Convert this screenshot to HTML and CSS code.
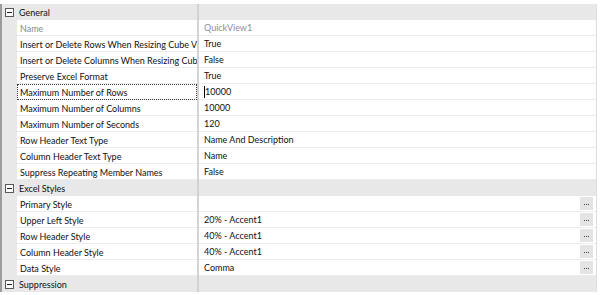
FILE: index.html
```html
<!DOCTYPE html>
<html>
  <head>
    <meta charset="UTF-8">
    <title>Property Grid</title>
    <link rel="stylesheet" href="styles.css">
  </head>
  <body>
    <div class="grid">
      <!-- General -->
      <div class="row cat">
        <div class="gutter"><span class="toggle"></span></div>
        <div class="name">General</div>
        <div class="split"></div>
        <div class="value"></div>
      </div>
      <div class="row prop readonly">
        <div class="gutter"></div>
        <div class="name">Name</div>
        <div class="split"></div>
        <div class="value">QuickView1</div>
      </div>
      <div class="row prop">
        <div class="gutter"></div>
        <div class="name">Insert or Delete Rows When Resizing Cube View</div>
        <div class="split"></div>
        <div class="value">True</div>
      </div>
      <div class="row prop">
        <div class="gutter"></div>
        <div class="name">Insert or Delete Columns When Resizing Cube View</div>
        <div class="split"></div>
        <div class="value">False</div>
      </div>
      <div class="row prop">
        <div class="gutter"></div>
        <div class="name">Preserve Excel Format</div>
        <div class="split"></div>
        <div class="value">True</div>
      </div>
      <div class="row prop focused">
        <div class="gutter"></div>
        <div class="name">Maximum Number of Rows</div>
        <div class="split"></div>
        <div class="value"><span class="caret"></span>10000</div>
      </div>
      <div class="row prop">
        <div class="gutter"></div>
        <div class="name">Maximum Number of Columns</div>
        <div class="split"></div>
        <div class="value">10000</div>
      </div>
      <div class="row prop">
        <div class="gutter"></div>
        <div class="name">Maximum Number of Seconds</div>
        <div class="split"></div>
        <div class="value">120</div>
      </div>
      <div class="row prop">
        <div class="gutter"></div>
        <div class="name">Row Header Text Type</div>
        <div class="split"></div>
        <div class="value">Name And Description</div>
      </div>
      <div class="row prop">
        <div class="gutter"></div>
        <div class="name">Column Header Text Type</div>
        <div class="split"></div>
        <div class="value">Name</div>
      </div>
      <div class="row prop">
        <div class="gutter"></div>
        <div class="name">Suppress Repeating Member Names</div>
        <div class="split"></div>
        <div class="value">False</div>
      </div>

      <!-- Excel Styles -->
      <div class="row cat">
        <div class="gutter"><span class="toggle"></span></div>
        <div class="name">Excel Styles</div>
        <div class="split"></div>
        <div class="value"></div>
      </div>
      <div class="row prop">
        <div class="gutter"></div>
        <div class="name">Primary Style</div>
        <div class="split"></div>
        <div class="value"><span class="text"></span><span class="dots-btn"><span></span><span></span><span></span></span></div>
      </div>
      <div class="row prop">
        <div class="gutter"></div>
        <div class="name">Upper Left Style</div>
        <div class="split"></div>
        <div class="value"><span class="text">20% - Accent1</span><span class="dots-btn"><span></span><span></span><span></span></span></div>
      </div>
      <div class="row prop">
        <div class="gutter"></div>
        <div class="name">Row Header Style</div>
        <div class="split"></div>
        <div class="value"><span class="text">40% - Accent1</span><span class="dots-btn"><span></span><span></span><span></span></span></div>
      </div>
      <div class="row prop">
        <div class="gutter"></div>
        <div class="name">Column Header Style</div>
        <div class="split"></div>
        <div class="value"><span class="text">40% - Accent1</span><span class="dots-btn"><span></span><span></span><span></span></span></div>
      </div>
      <div class="row prop">
        <div class="gutter"></div>
        <div class="name">Data Style</div>
        <div class="split"></div>
        <div class="value"><span class="text">Comma</span><span class="dots-btn"><span></span><span></span><span></span></span></div>
      </div>

      <!-- Suppression -->
      <div class="row cat">
        <div class="gutter"><span class="toggle"></span></div>
        <div class="name">Suppression</div>
        <div class="split"></div>
        <div class="value"></div>
      </div>
    </div>
  </body>
</html>
```

FILE: styles.css
```css
/* Base */
* {
  box-sizing: border-box;
}
body {
  margin: 0;
  background: #fff;
  font-family: 'Lato', 'Open Sans', sans-serif;
  font-size: 9px;
  color: #111;
}
/* Property grid frame */
.grid {
  margin-top: 4px;
  width: 597px;
  border-left: 2px solid #9c9c9c;
  border-right: 1px solid #dedede;
}
.row {
  display: grid;
  grid-template-columns: 15px 180px 2px 1fr;
  height: 16px;
  line-height: 17px;
}
.gutter {
  background: #e8e8e8;
  position: relative;
}
.split {
  background: #d4d4d4;
}
.name, .value {
  white-space: nowrap;
  overflow: hidden;
}
/* Category rows */
.cat {
  background: #e8e8e8;
}
.cat .name {
  padding-left: 2px;
}
.cat .split {
  background: #d2d2d2;
}
.toggle {
  position: absolute;
  left: 3px;
  top: 4px;
  width: 9px;
  height: 9px;
  border: 1px solid #5a5a5a;
  background: #fff;
}
.toggle::after {
  content: "";
  position: absolute;
  left: 1px;
  top: 3px;
  width: 5px;
  height: 1px;
  background: #222;
}
/* Property rows */
.prop .name,
.prop .value {
  border-bottom: 1px solid #ececec;
}
.prop .name {
  padding-left: 3px;
}
.prop .value {
  padding-left: 5px;
  display: flex;
  align-items: center;
}
.readonly .name {
  color: #8a8a8a;
}
.readonly .value {
  color: #8b8d9c;
}
.focused .name {
  outline: 1px dotted #3a3a3a;
  outline-offset: -1px;
}
.caret {
  display: inline-block;
  width: 1px;
  height: 12px;
  background: #000;
}
.value .text {
  flex: 1;
}
/* Ellipsis button */
.dots-btn {
  width: 13px;
  height: 13px;
  margin-right: 3px;
  background: #e4e4e4;
  display: flex;
  align-items: center;
  justify-content: center;
  gap: 1px;
  padding-top: 1px;
}
.dots-btn span {
  width: 1px;
  height: 1px;
  background: #3c4452;
}
```
